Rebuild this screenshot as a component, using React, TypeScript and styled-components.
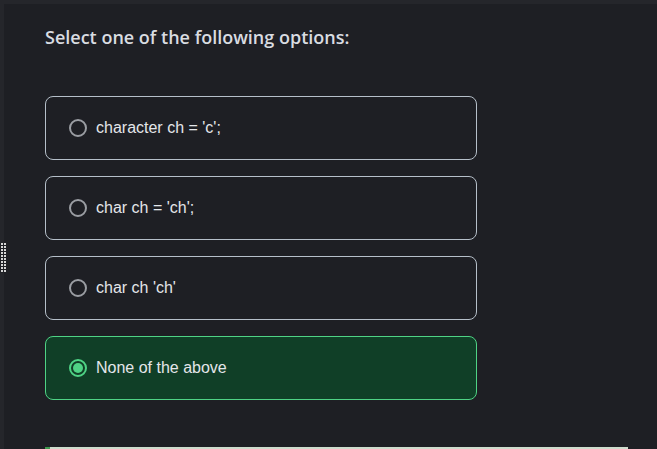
import React, { useState } from "react";
import styled, { createGlobalStyle } from "styled-components";

const Global = createGlobalStyle`
  html, body { margin: 0; padding: 0; background: #25262b; }
  body { width: 657px; height: 449px; overflow: hidden; }
`;

const Frame = styled.div`
  position: relative;
  width: 657px;
  height: 449px;
  padding: 4px 0 0 4px;
  box-sizing: border-box;
  background: #25262b;
  overflow: hidden;
`;

const Panel = styled.main`
  background: #1e1f24;
  height: 100%;
  box-sizing: border-box;
  padding: 21px 0 0 41px;
  display: flex;
  flex-direction: column;
`;

const Heading = styled.h2`
  margin: 0;
  font-family: "Open Sans", "Noto Sans", sans-serif;
  font-weight: 600;
  font-size: 18px;
  line-height: 24px;
  color: #d9dce1;
`;

const Options = styled.div`
  margin-top: 47px;
  display: flex;
  flex-direction: column;
  gap: 16px;
  width: 432px;
`;

const Option = styled.label<{ $selected: boolean }>`
  height: 64px;
  box-sizing: border-box;
  border: 1px solid ${(p) => (p.$selected ? "#4fd385" : "#b5bfc9")};
  background: ${(p) => (p.$selected ? "#103f27" : "transparent")};
  border-radius: 8px;
  display: flex;
  align-items: center;
  padding-left: 23px;
  gap: 9px;
  cursor: pointer;
`;

const Radio = styled.span<{ $selected: boolean }>`
  width: 18px;
  height: 18px;
  box-sizing: border-box;
  border-radius: 50%;
  border: 2px solid ${(p) => (p.$selected ? "#4fd385" : "#9a9da2")};
  display: flex;
  align-items: center;
  justify-content: center;
  &::after {
    content: "";
    width: 10px;
    height: 10px;
    border-radius: 50%;
    background: ${(p) => (p.$selected ? "#4fd385" : "transparent")};
  }
`;

const OptionText = styled.span`
  font-family: "Liberation Sans", Arial, sans-serif;
  font-size: 16px;
  color: #e4e6ea;
`;

const Progress = styled.div`
  margin-top: 47px;
  width: 583px;
  height: 4px;
  background: #cfdccd;
  display: flex;
`;

const ProgressFill = styled.div`
  height: 100%;
  background: #3f9a4f;
`;

const Handle = styled.div`
  position: absolute;
  left: 0;
  top: 243px;
  width: 6px;
  height: 30px;
  background-image: linear-gradient(90deg, #1e1f24 1px, transparent 1px),
    linear-gradient(0deg, #1e1f24 1px, transparent 1px);
  background-color: #d6d6d6;
  background-size: 3px 3px;
`;

const options = [
  "character ch = 'c';",
  "char ch = 'ch';",
  "char ch 'ch'",
  "None of the above",
];

export default function App() {
  const [selected, setSelected] = useState(3);
  return (
    <>
      <Global />
      <Frame>
        <Panel>
          <Heading>Select one of the following options:</Heading>
          <Options>
            {options.map((o, i) => (
              <Option key={o} $selected={selected === i} onClick={() => setSelected(i)}>
                <Radio $selected={selected === i} />
                <OptionText>{o}</OptionText>
              </Option>
            ))}
          </Options>
          <Progress>
            <ProgressFill style={{ width: "5px" }} />
          </Progress>
        </Panel>
        <Handle />
      </Frame>
    </>
  );
}
